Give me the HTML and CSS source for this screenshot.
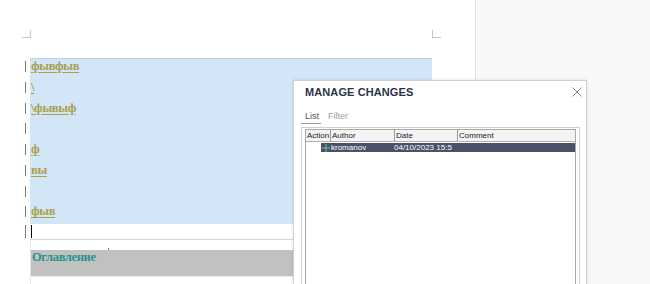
FILE: index.html
```html
<!DOCTYPE html>
<html>
<head>
<meta charset="utf-8">
<link rel="stylesheet" href="styles.css">
</head>
<body>
<div class="app">
  <div class="doc">
    <div class="corners"><span class="corner tl"></span><span class="corner tr"></span></div>
    <div class="sel">
      <div class="row first"><span class="bar"></span><span class="tx"><span class="ins">фывфыв</span></span></div>
      <div class="row"><span class="bar"></span><span class="tx"><span class="ins">\</span></span></div>
      <div class="row"><span class="bar"></span><span class="tx"><span class="ins">\фывыф</span></span></div>
      <div class="row"><span class="bar"></span><span class="tx"></span></div>
      <div class="row"><span class="bar"></span><span class="tx"><span class="ins">ф</span></span></div>
      <div class="row"><span class="bar"></span><span class="tx"><span class="ins">вы</span></span></div>
      <div class="row"><span class="bar"></span><span class="tx"></span></div>
      <div class="row"><span class="bar"></span><span class="tx"><span class="ins">фыв</span></span></div>
    </div>
    <div class="row cur"><span class="bar"></span><span class="tx"><span class="caret"></span></span></div>
    <div class="toc">
      <div class="toc-gap"><span class="tick"></span></div>
      <div class="toc-title">Оглавление</div>
    </div>
  </div>
  <div class="side"></div>

  <div class="dialog">
    <div class="dlg-title">MANAGE CHANGES</div>
    <svg class="close" width="10" height="10" viewBox="0 0 10 10"><path d="M0.5 0.5 L9.5 9.5 M9.5 0.5 L0.5 9.5" stroke="#8a8a8a" stroke-width="1" fill="none"/></svg>
    <div class="tabs"><span class="tab active">List</span><span class="tab">Filter</span></div>
    <div class="grid-wrap">
      <div class="grid">
        <div class="ghead"><span>Action</span><span>Author</span><span>Date</span><span>Comment</span></div>
        <div class="grow">
          <span class="plus"><svg width="8" height="8" viewBox="0 0 8 8"><path d="M4 0 V8 M0 4 H8" stroke="#63a57e" stroke-width="1.4" fill="none"/></svg></span>
          <span class="c-author">kromanov</span>
          <span class="c-date">04/10/2023 15:5</span>
        </div>
      </div>
    </div>
  </div>
</div>
</body>
</html>
```

FILE: styles.css
```css
html, body {
  margin: 0;
  padding: 0;
  background: #fff;
}
.app {
  position: relative;
  display: flex;
  width: 650px;
  height: 284px;
  overflow: hidden;
}
.doc {
  width: 476px;
  flex: none;
  background: #fff;
  border-right: 1px solid #dddddd;
  padding-top: 30px;
  box-sizing: border-box;
  font-family: "Liberation Serif", serif;
}
.side {
  flex: 1;
  background: #f7f8fa;
}
.corners {
  display: flex;
  justify-content: space-between;
  margin-left: 22px;
  width: 419px;
  height: 8px;
}
.corner {
  width: 8px;
  height: 7px;
  border-bottom: 1px solid #c4c4c4;
}
.corner.tl { border-right: 1px solid #c4c4c4; }
.corner.tr { border-left: 1px solid #c4c4c4; }
.sel {
  margin-top: 20px;
}
.row {
  display: grid;
  grid-template-columns: 6px 1fr;
  height: 20.75px;
  margin-left: 24px;
  width: 408px;
}
.bar {
  width: 1px;
  height: 11px;
  margin: 3px 0 0 1px;
  background: #7a7a7a;
}
.sel .tx {
  background: #d2e6f8;
}
.row.first .tx {
  box-shadow: inset 0 1px 0 #b9d3ef;
}
.ins {
  display: block;
  font-size: 12.5px;
  letter-spacing: -0.35px;
  font-weight: 700;
  line-height: 15px;
  padding-top: 1px;
  color: #a8a04a;
  text-decoration: underline;
  text-underline-offset: 2px;
  padding-left: 1px;
}
.row.cur {
  height: 15px;
}
.row.cur .bar {
  margin-top: 1px;
  height: 13px;
}
.caret {
  display: block;
  width: 1px;
  height: 13px;
  margin: 1px 0 0 1px;
  background: #000;
}
.toc {
  margin-left: 30px;
  width: 402px;
  border-top: 1px solid #d8d8d8;
  border-left: 1px solid #e6e6e6;
  height: 60px;
}
.toc-gap {
  height: 10px;
  position: relative;
}
.tick {
  position: absolute;
  left: 77px;
  top: 8px;
  width: 1px;
  height: 2px;
  background: #777;
}
.toc-title {
  height: 27px;
  background: #c1c1c1;
  border-bottom: 1px solid #e8e8e8;
  box-sizing: border-box;
  padding: 1px 0 0 1px;
  font-size: 12.5px;
  letter-spacing: -0.35px;
  font-weight: 700;
  line-height: 13px;
  color: #22948f;
}
.dialog {
  position: absolute;
  left: 293px;
  top: 80px;
  width: 294px;
  height: 230px;
  box-sizing: border-box;
  background: #fff;
  border: 1px solid #d0d0d0;
  box-shadow: 0 0 3px rgba(0,0,0,0.12);
  padding: 4px 6px 0 7px;
  font-family: "Liberation Sans", sans-serif;
}
.dlg-title {
  margin-left: 4px;
  font-size: 11px;
  font-weight: 700;
  line-height: 14px;
  color: #2d3346;
  letter-spacing: 0.1px;
}
.close {
  position: absolute;
  right: 4px;
  top: 6px;
}
.tabs {
  display: flex;
  margin-top: 12px;
  font-size: 9px;
  line-height: 11px;
}
.tab {
  color: #a0a0a0;
  margin-left: 7px;
}
.tab.active {
  margin-left: 0;
  color: #555;
  padding: 0 2px 1px 4px;
  border-bottom: 1px solid #9a9a9a;
}
.grid-wrap {
  margin-top: 3px;
  border: 1px solid #cfcfcf;
  padding: 1px 3px 0 3px;
  height: 200px;
}
.grid {
  border: 1px solid #a8a8a8;
  border-bottom: none;
  height: 200px;
  font-size: 8px;
}
.ghead {
  display: grid;
  grid-template-columns: 25px 64px 63px 1fr;
  height: 12px;
  box-sizing: border-box;
  background: #f4f4f4;
  border-bottom: 1px solid #b0b0b0;
}
.ghead span {
  border-right: 1px solid #9a9a9a;
  padding-left: 1px;
  line-height: 11px;
  color: #222;
}
.ghead span:last-child { border-right: none; }
.grow {
  display: flex;
  margin: 1px 0 0 15px;
  height: 9px;
  background: #4a5168;
  color: #fff;
  line-height: 9px;
}
.plus {
  width: 9px;
  display: flex;
  align-items: center;
  justify-content: center;
}
.c-author {
  width: 63px;
  padding-left: 1px;
}
.c-date {
  width: 63px;
  overflow: hidden;
  white-space: nowrap;
}
```
